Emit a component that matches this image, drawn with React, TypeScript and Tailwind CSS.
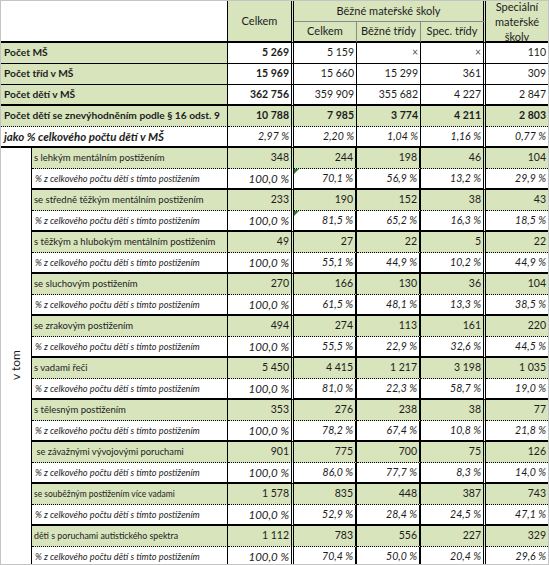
const GREEN = 'bg-[#d8e4bc]';

type TopRow = { label: string; vals: string[]; kind: 'plain' | 'sum' | 'pct'; bottom: string };

const topRows: TopRow[] = [
  { label: 'Počet MŠ', vals: ['5 269', '5 159', '×', '×', '110'], kind: 'plain', bottom: 'border-b border-b-black' },
  { label: 'Počet tříd v MŠ', vals: ['15 969', '15 660', '15 299', '361', '309'], kind: 'plain', bottom: 'border-b border-b-black' },
  { label: 'Počet dětí v MŠ', vals: ['362 756', '359 909', '355 682', '4 227', '2 847'], kind: 'plain', bottom: 'border-b-2 border-b-black' },
  {
    label: 'Počet dětí se znevýhodněním podle § 16 odst. 9',
    vals: ['10 788', '7 985', '3 774', '4 211', '2 803'],
    kind: 'sum',
    bottom: 'border-b border-b-black [border-bottom-style:dotted]',
  },
  { label: 'jako % celkového počtu dětí v MŠ', vals: ['2,97 %', '2,20 %', '1,04 %', '1,16 %', '0,77 %'], kind: 'pct', bottom: 'border-b-2 border-b-black' },
];

type Group = { label: string; size: string; nums: string[]; pcts: string[]; mark?: boolean };

const groups: Group[] = [
  { label: 's lehkým mentálním postižením', size: 'text-[9.5px]', nums: ['348', '244', '198', '46', '104'], pcts: ['100,0 %', '70,1 %', '56,9 %', '13,2 %', '29,9 %'], mark: true },
  { label: 'se středně těžkým mentálním postižením', size: 'text-[9.5px]', nums: ['233', '190', '152', '38', '43'], pcts: ['100,0 %', '81,5 %', '65,2 %', '16,3 %', '18,5 %'], mark: true },
  { label: 's těžkým a hlubokým mentálním postižením', size: 'text-[9.5px]', nums: ['49', '27', '22', '5', '22'], pcts: ['100,0 %', '55,1 %', '44,9 %', '10,2 %', '44,9 %'] },
  { label: 'se sluchovým postižením', size: 'text-[9.5px]', nums: ['270', '166', '130', '36', '104'], pcts: ['100,0 %', '61,5 %', '48,1 %', '13,3 %', '38,5 %'] },
  { label: 'se zrakovým postižením', size: 'text-[9.5px]', nums: ['494', '274', '113', '161', '220'], pcts: ['100,0 %', '55,5 %', '22,9 %', '32,6 %', '44,5 %'] },
  { label: 's vadami řeči', size: 'text-[9.5px]', nums: ['5 450', '4 415', '1 217', '3 198', '1 035'], pcts: ['100,0 %', '81,0 %', '22,3 %', '58,7 %', '19,0 %'] },
  { label: 's tělesným postižením', size: 'text-[9.5px]', nums: ['353', '276', '238', '38', '77'], pcts: ['100,0 %', '78,2 %', '67,4 %', '10,8 %', '21,8 %'] },
  { label: '\u00a0se závažnými vývojovými poruchami', size: 'text-[9.3px]', nums: ['901', '775', '700', '75', '126'], pcts: ['100,0 %', '86,0 %', '77,7 %', '8,3 %', '14,0 %'] },
  { label: 'se souběžným postižením více vadami', size: 'text-[8.5px]', nums: ['1 578', '835', '448', '387', '743'], pcts: ['100,0 %', '52,9 %', '28,4 %', '24,5 %', '47,1 %'] },
  { label: 'děti s poruchami autistického spektra', size: 'text-[8.8px]', nums: ['1 112', '783', '556', '227', '329'], pcts: ['100,0 %', '70,4 %', '50,0 %', '20,4 %', '29,6 %'] },
];

// right border of each numeric column
const topRight = [
  'border-r-[3px] border-r-black [border-right-style:double]',
  'border-r border-r-black',
  'border-r border-r-black',
  'border-r-[3px] border-r-black [border-right-style:double]',
  '',
];
const secRight = [
  'border-r-[3px] border-r-black [border-right-style:double]',
  'border-r-2 border-r-black',
  'border-r-2 border-r-black',
  'border-r-[3px] border-r-black [border-right-style:double]',
  '',
];

const num = 'flex items-center justify-end pr-[2px] whitespace-nowrap overflow-hidden';

export default function App() {
  return (
    <div className="w-[549px] h-[565px] overflow-hidden bg-white border border-[#c4c4c4] font-['Lato',sans-serif] text-[#1c1c1c]">
      <div className="grid grid-cols-[31px_196px_66px_63px_64px_65px_62px] auto-rows-[21px]">
        {/* header */}
        <div className="col-span-2 row-span-2 bg-white border-r border-r-black border-b-2 border-b-black" />
        <div className={`row-span-2 ${GREEN} flex items-center justify-center text-[11px] border-r-[3px] border-r-black [border-right-style:double] border-b-2 border-b-black`}>
          Celkem
        </div>
        <div className={`col-span-3 ${GREEN} flex items-center justify-center text-[11px] border-b border-b-[#8a8a8a] border-r-[3px] border-r-black [border-right-style:double]`}>
          Běžné mateřské školy
        </div>
        <div className={`row-span-2 ${GREEN} flex items-center justify-center overflow-hidden text-center text-[11px] leading-[15px] border-b-2 border-b-black`}>
          <span>
            Speciální
            <br />
            mateřské
            <br />
            školy
          </span>
        </div>
        <div className={`${GREEN} flex items-center justify-center text-[11px] border-r border-r-[#8a8a8a] border-b-2 border-b-black`}>Celkem</div>
        <div className={`${GREEN} flex items-center justify-center text-[11px] border-r border-r-[#8a8a8a] border-b-2 border-b-black`}>Běžné třídy</div>
        <div className={`${GREEN} flex items-center justify-center text-[11px] border-r-[3px] border-r-black [border-right-style:double] border-b-2 border-b-black`}>
          Spec. třídy
        </div>

        {/* summary rows */}
        {topRows.map((r) => {
          const labelBg = r.kind === 'pct' ? 'bg-white' : GREEN;
          const labelFont = r.kind === 'pct' ? 'text-[11.5px] font-bold italic' : 'text-[10.2px] font-bold';
          return (
            <div key={r.label} className="contents">
              <div className={`col-span-2 ${labelBg} ${labelFont} flex items-center pl-[3px] whitespace-nowrap border-r border-r-black ${r.bottom}`}>
                {r.label}
              </div>
              {r.vals.map((v, i) => {
                const bg = r.kind === 'sum' ? GREEN : 'bg-white';
                let font = 'text-[10.5px]';
                if (r.kind === 'sum' || (r.kind === 'plain' && i === 0)) font = 'text-[10.5px] font-bold';
                if (r.kind === 'pct') font = 'text-[10.5px] italic';
                const light = v === '×' ? 'text-[9px] text-[#555]' : '';
                return (
                  <div key={i} className={`${num} ${bg} ${font} ${light} ${topRight[i]} ${r.bottom}`}>
                    {v}
                  </div>
                );
              })}
            </div>
          );
        })}

        {/* breakdown */}
        <div className="row-span-20 bg-white border-r border-r-black flex items-center justify-center">
          <span className="text-[12px] [writing-mode:vertical-rl] rotate-180 pb-[14px]">v tom</span>
        </div>
        {groups.map((g) => (
          <div key={g.label} className="contents">
            <div
              className={`${GREEN} ${g.size} flex items-center pl-[2px] whitespace-nowrap overflow-hidden border-r border-r-black border-b border-b-black [border-bottom-style:dotted]`}
            >
              {g.label}
            </div>
            {g.nums.map((v, i) => (
              <div key={i} className={`${num} ${GREEN} text-[10.5px] ${secRight[i]} border-b border-b-black [border-bottom-style:dotted]`}>
                {v}
              </div>
            ))}
            <div className="bg-white text-[9.2px] italic flex items-center pl-[3px] whitespace-nowrap overflow-hidden border-r border-r-black border-b-2 border-b-black">
              % z celkového počtu dětí s tímto postižením
            </div>
            {g.pcts.map((v, i) => (
              <div
                key={i}
                className={`relative ${num} bg-white italic ${i === 0 ? 'text-[11.5px]' : 'text-[10.5px]'} ${secRight[i]} border-b-2 border-b-black`}
              >
                {g.mark && i === 1 && (
                  <span className="absolute left-0 top-0 w-0 h-0 border-t-[5px] border-t-[#2f7d32] border-r-[5px] border-r-transparent" />
                )}
                {v}
              </div>
            ))}
          </div>
        ))}
      </div>
    </div>
  );
}
